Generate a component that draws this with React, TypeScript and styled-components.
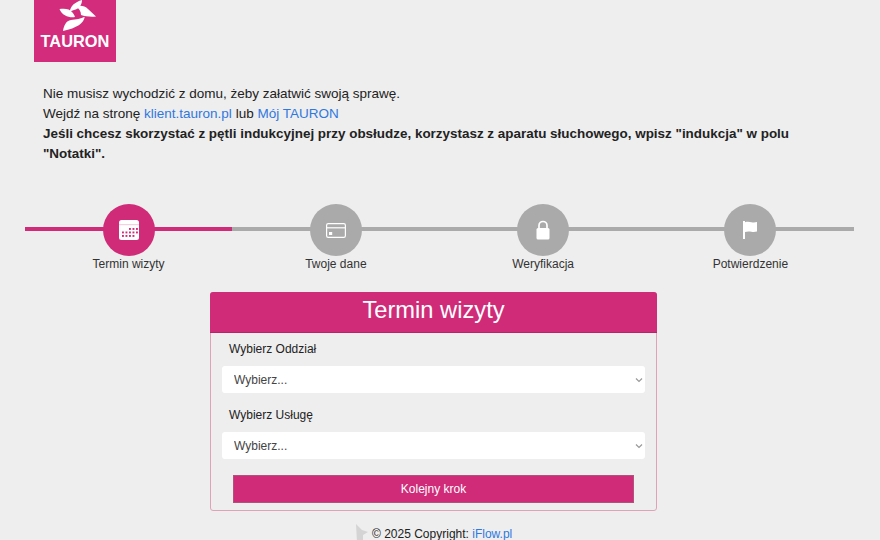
import React from 'react'
import styled, { createGlobalStyle } from 'styled-components'

const pink = '#d02b78'
const grey = '#aaaaaa'

const GlobalStyle = createGlobalStyle`
  html, body {
    margin: 0;
    height: 540px;
    overflow: hidden;
    background: #eeeeee;
    color: #222222;
    font-family: "Liberation Sans", Arial, sans-serif;
  }
`

const Page = styled.div`
  height: 540px;
  overflow: hidden;
`

const LogoBox = styled.div`
  display: flex;
  flex-direction: column;
  align-items: center;
  width: 82px;
  height: 62px;
  margin-left: 34px;
  overflow: hidden;
  background: #d32c7d;
  color: #ffffff;
`

const LogoMark = styled.svg`
  display: block;
  width: 44px;
  height: 31px;
  flex-shrink: 0;
`

const LogoText = styled.div`
  margin-top: 1px;
  font-size: 16.4px;
  line-height: 18px;
  font-weight: 700;
`

const Notice = styled.div`
  margin: 22px 70px 0 43px;
  font-size: 13.5px;
  line-height: 20px;
`

const NoticeStrong = styled.div`
  font-size: 13.45px;
  font-weight: 700;
`

const Link = styled.a`
  color: #2f78e0;
  text-decoration: none;
`

const Stepper = styled.div`
  display: grid;
  grid-template-columns: repeat(4, 1fr);
  margin: 40px 26px 0 25px;
`

const Step = styled.div<{ $active?: boolean }>`
  position: relative;
  display: flex;
  flex-direction: column;
  align-items: center;

  &::before {
    content: '';
    position: absolute;
    top: 23px;
    left: 0;
    right: 0;
    height: 4px;
    background: ${(p) => (p.$active ? pink : grey)};
  }
`

const Circle = styled.div<{ $active?: boolean }>`
  position: relative;
  display: flex;
  align-items: center;
  justify-content: center;
  width: 52px;
  height: 52px;
  border-radius: 50%;
  background: ${(p) => (p.$active ? pink : grey)};
`

const StepLabel = styled.div`
  font-size: 12px;
  line-height: 16px;
  color: #333333;
`

const Card = styled.div`
  width: 447px;
  box-sizing: border-box;
  margin: 20px 0 0 210px;
  border: 1px solid #dfa3b8;
  border-radius: 3px;
`

const CardHeader = styled.div`
  box-sizing: border-box;
  margin: -1px -1px 0;
  height: 41px;
  border-bottom: 1px solid #b92468;
  border-radius: 3px 3px 0 0;
  background: ${pink};
  color: #ffffff;
  font-size: 23.7px;
  line-height: 36px;
  text-align: center;
`

const CardBody = styled.div`
  display: flex;
  flex-direction: column;
  padding: 7px 11px 7px;
`

const FieldLabel = styled.label`
  padding-left: 7px;
  font-size: 12px;
  line-height: 18px;
  color: #222222;
`

const SelectWrap = styled.div`
  position: relative;
  margin: 8px 0 13px;

  &:last-of-type {
    margin-bottom: 16px;
  }
`

const Select = styled.select`
  display: block;
  width: 100%;
  height: 27px;
  padding: 0 12px;
  border: 0;
  border-radius: 3px;
  appearance: none;
  background: #ffffff;
  color: #444444;
  font-family: inherit;
  font-size: 12px;
`

const Chevron = styled.svg`
  position: absolute;
  top: 11px;
  right: 2px;
  width: 8px;
  height: 6px;
  color: #999999;
`

const NextButton = styled.button`
  display: block;
  height: 28px;
  margin: 0 11px;
  padding: 0;
  border: 1px solid #b0527c;
  background: ${pink};
  color: #ffffff;
  font-family: inherit;
  font-size: 12px;
`

const Footer = styled.div`
  display: flex;
  align-items: flex-start;
  gap: 4px;
  margin-top: 15px;
  padding-left: 356px;
  font-size: 12px;
  line-height: 16px;
  white-space: nowrap;
`

const FooterMark = styled.svg`
  width: 12px;
  height: 18px;
  margin-top: -2px;
`

const calendarDots = [
  { y: 8, xs: [10, 13.5, 17] },
  { y: 11.5, xs: [3, 6.5, 10, 13.5, 17] },
  { y: 15, xs: [3, 6.5, 10, 13.5] },
]

const CalendarIcon = () => (
  <svg width="20" height="20" viewBox="0 0 20 20">
    <rect x="0" y="0" width="20" height="20" rx="2.5" fill="#fff" />
    <rect x="0" y="4.5" width="20" height="0.6" fill="#e9a3c4" />
    {calendarDots.flatMap(({ y, xs }) =>
      xs.map((x) => <rect key={`${x}-${y}`} x={x} y={y} width="1.9" height="1.9" fill={pink} />),
    )}
  </svg>
)

const CardIcon = () => (
  <svg width="20" height="15" viewBox="0 0 20 15" fill="none">
    <rect x="0.6" y="0.6" width="18.8" height="13.8" rx="1.6" stroke="#fff" strokeWidth="1.2" />
    <rect x="1" y="4.2" width="18" height="1.2" fill="#fff" />
    <rect x="3" y="9" width="3.2" height="3" fill="#fff" />
  </svg>
)

const LockIcon = () => (
  <svg width="14" height="20" viewBox="0 0 14 20">
    <path d="M3 9V5.5a4 4 0 0 1 8 0V9" fill="none" stroke="#fff" strokeWidth="1.7" />
    <rect x="0.5" y="8" width="13" height="11.5" rx="1.5" fill="#fff" />
  </svg>
)

const FlagIcon = () => (
  <svg width="14" height="18" viewBox="0 0 14 18">
    <rect x="0" y="0" width="2" height="18" fill="#fff" />
    <path d="M2 1.2C4.5 .4 6.5 .8 8.5 1.2c2 .4 3.7 .3 5.5-.2v9.5c-2 .5-3.700.6-5.700.2-2.200-.4-4.200-.4-6.300.3z" fill="#fff" />
  </svg>
)

const steps = [
  { label: 'Termin wizyty', icon: <CalendarIcon />, active: true },
  { label: 'Twoje dane', icon: <CardIcon /> },
  { label: 'Weryfikacja', icon: <LockIcon /> },
  { label: 'Potwierdzenie', icon: <FlagIcon /> },
]

const Field = ({ label }: { label: string }) => (
  <>
    <FieldLabel>{label}</FieldLabel>
    <SelectWrap>
      <Select defaultValue="">
        <option value="">Wybierz...</option>
      </Select>
      <Chevron viewBox="0 0 8 6" fill="none">
        <path d="M1 1.5l3 3 3-3" stroke="currentColor" strokeWidth="1.2" />
      </Chevron>
    </SelectWrap>
  </>
)

export default function App() {
  return (
    <Page>
      <GlobalStyle />
      <LogoBox>
        <LogoMark viewBox="-1 0 42 31">
          <g fill="#ffffff">
            <path d="M14.7 12.7C15 6 20 2 27 0c0 5-3 9-8 10-2 .5-3.500 1.500-4.300 2.700z" />
            <path d="M20.7 6.700C25 5 30 6 33 9l8 7.500c-5 .5-11 0-15-1.500 0-4-2-7-5.300-8.300z" />
            <path d="M29.7 16.700C29 23 22 28 8 31c1-6 3-10 8-11 5-1 10-1 13.700-3.300z" />
            <path d="M4.500 9C10 8 15 9 17 12c1.500 2 2.500 3 3 5-5 1-13-1-15.500-8z" />
          </g>
        </LogoMark>
        <LogoText>TAURON</LogoText>
      </LogoBox>

      <Notice>
        <div>Nie musisz wychodzić z domu, żeby załatwić swoją sprawę.</div>
        <div>
          Wejdź na stronę <Link href="#">klient.tauron.pl</Link> lub <Link href="#">Mój TAURON</Link>
        </div>
        <NoticeStrong>
          Jeśli chcesz skorzystać z pętli indukcyjnej przy obsłudze, korzystasz z aparatu słuchowego, wpisz "indukcja" w
          polu "Notatki".
        </NoticeStrong>
      </Notice>

      <Stepper>
        {steps.map((step) => (
          <Step key={step.label} $active={step.active}>
            <Circle $active={step.active}>{step.icon}</Circle>
            <StepLabel>{step.label}</StepLabel>
          </Step>
        ))}
      </Stepper>

      <Card>
        <CardHeader>Termin wizyty</CardHeader>
        <CardBody>
          <Field label="Wybierz Oddział" />
          <Field label="Wybierz Usługę" />
          <NextButton type="button">Kolejny krok</NextButton>
        </CardBody>
      </Card>

      <Footer>
        <FooterMark viewBox="0 0 12 18">
          <path d="M0 0l6 6 6 2-5 3v7H1z" fill="#d4d4d4" />
        </FooterMark>
        <span>
          © 2025 Copyright: <Link href="#">iFlow.pl</Link>
        </span>
      </Footer>
    </Page>
  )
}
